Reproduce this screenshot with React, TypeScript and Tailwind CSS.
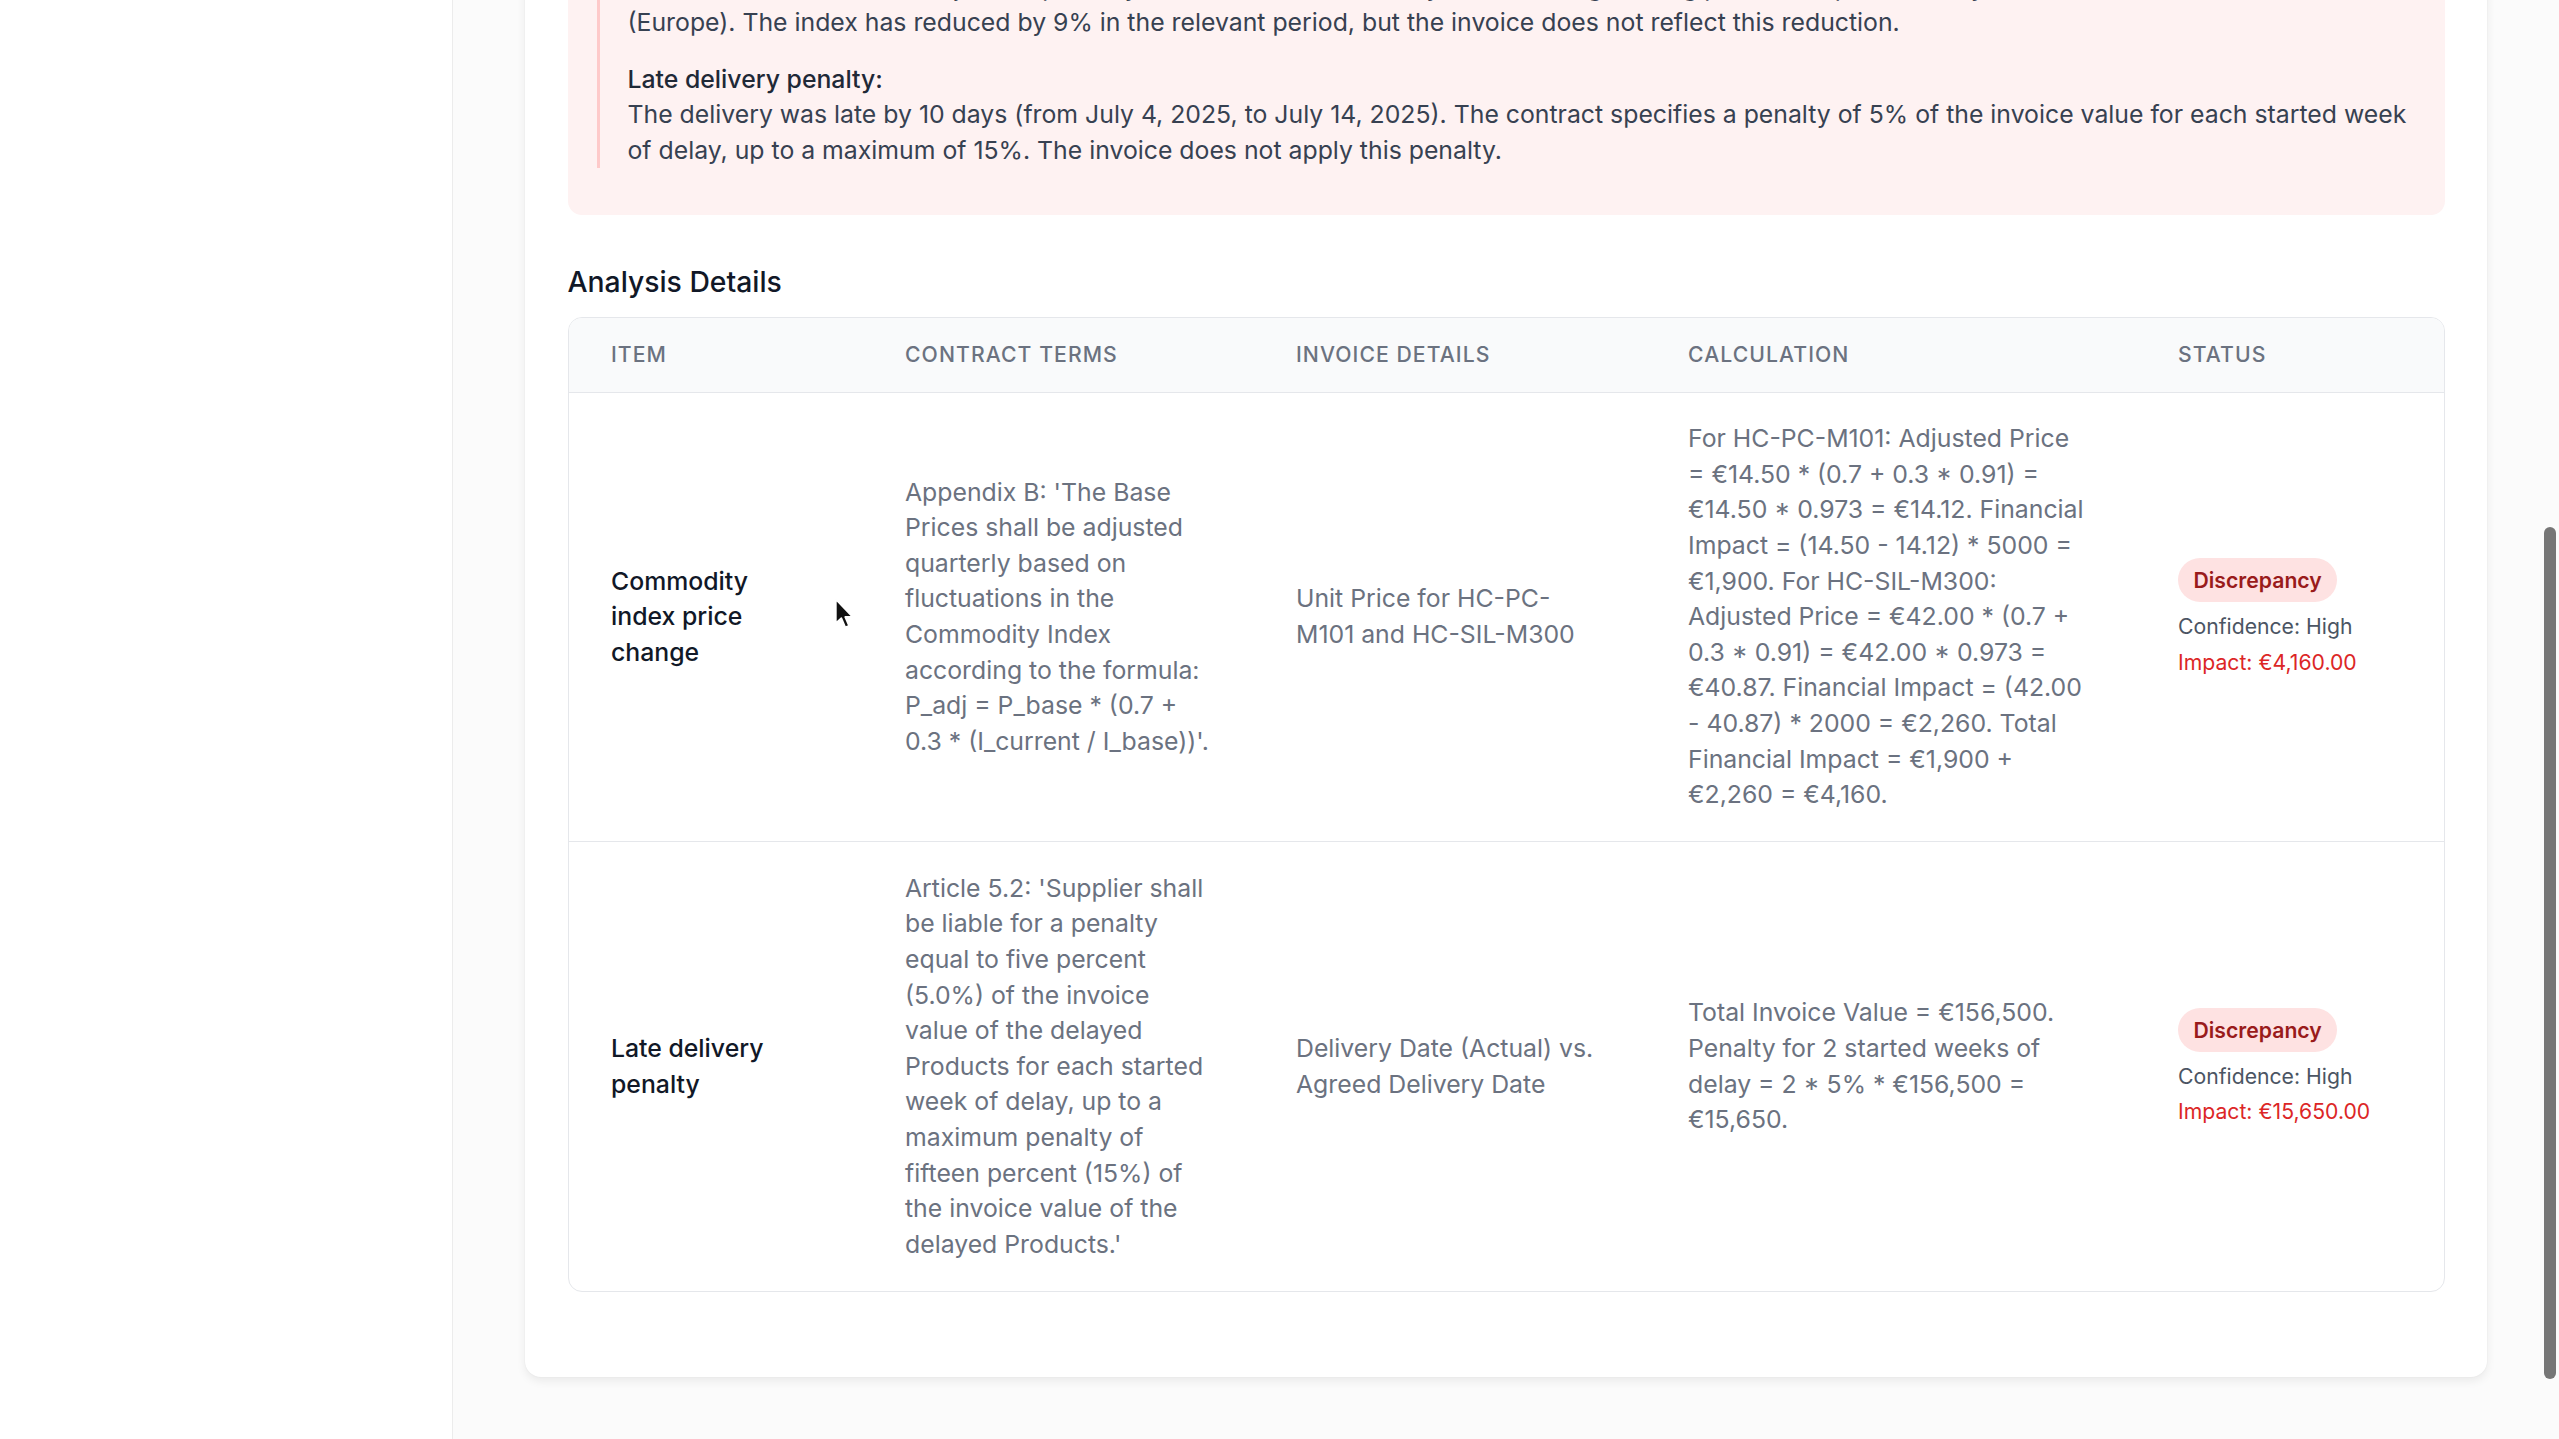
import React from "react";

const rows = [
  {
    item: "Commodity index price change",
    terms:
      "Appendix B: 'The Base Prices shall be adjusted quarterly based on fluctuations in the Commodity Index according to the formula: P_adj = P_base * (0.7 + 0.3 * (I_current / I_base))'.",
    invoice: "Unit Price for HC-PC-M101 and HC-SIL-M300",
    calc:
      "For HC-PC-M101: Adjusted Price = €14.50 * (0.7 + 0.3 * 0.91) = €14.50 * 0.973 = €14.12. Financial Impact = (14.50 - 14.12) * 5000 = €1,900. For HC-SIL-M300: Adjusted Price = €42.00 * (0.7 + 0.3 * 0.91) = €42.00 * 0.973 = €40.87. Financial Impact = (42.00 - 40.87) * 2000 = €2,260. Total Financial Impact = €1,900 + €2,260 = €4,160.",
    impact: "Impact: €4,160.00",
  },
  {
    item: "Late delivery penalty",
    terms:
      "Article 5.2: 'Supplier shall be liable for a penalty equal to five percent (5.0%) of the invoice value of the delayed Products for each started week of delay, up to a maximum penalty of fifteen percent (15%) of the invoice value of the delayed Products.'",
    invoice: "Delivery Date (Actual) vs. Agreed Delivery Date",
    calc:
      "Total Invoice Value = €156,500. Penalty for 2 started weeks of delay = 2 * 5% * €156,500 = €15,650.",
    impact: "Impact: €15,650.00",
  },
];

function Cursor() {
  return (
    <svg
      className="absolute left-[834px] top-[598px] pointer-events-none"
      width="22"
      height="32"
      viewBox="0 0 14 21"
    >
      <path
        d="M1 1 L1 16.5 L4.6 13.2 L7.2 19.2 L9.6 18.2 L7.1 12.4 L12 12.4 Z"
        fill="#111"
        stroke="#fff"
        strokeWidth="1.1"
        strokeLinejoin="round"
      />
    </svg>
  );
}

export default function App() {
  return (
    <div className="flex h-screen w-screen overflow-hidden bg-[#fbfbfb] font-[Inter,sans-serif]">
      <aside className="h-full w-[453px] shrink-0 border-r border-[#ececec] bg-white" />
      <main className="relative h-full flex-1 overflow-hidden">
        <div className="-mt-[136px] px-[72px]">
          <div className="rounded-[16px] bg-white px-[42.5px] pt-[42.5px] pb-[85px] shadow-[0_4px_10px_rgba(0,0,0,0.07),0_0_2px_rgba(0,0,0,0.05)]">
            <div className="rounded-[14px] bg-[#fef2f2] pt-[28px] pb-[47px] pl-[29px] pr-[28px]">
              <div className="flex flex-col gap-[21px] border-l-[3px] border-[#fecaca] pl-[28px] text-[24.8px] leading-[35.4px] text-[#374151]">
                <div>
                  <p className="font-medium text-[#1f2937]">Commodity index price change:</p>
                  <p>
                    The Base Prices must be adjusted quarterly based on the Commodity Index for engineering plastics as published by ICIS
                    <br />
                    (Europe). The index has reduced by 9% in the relevant period, but the invoice does not reflect this reduction.
                  </p>
                </div>
                <div>
                  <p className="font-medium text-[#1f2937]">Late delivery penalty:</p>
                  <p>
                    The delivery was late by 10 days (from July 4, 2025, to July 14, 2025). The contract specifies a penalty of 5% of the invoice value for each started week of delay, up to a maximum of 15%. The invoice does not apply this penalty.
                  </p>
                </div>
              </div>
            </div>

            <h3 className="mt-[46px] mb-[14px] text-[28.3px] leading-[42.5px] font-medium text-[#111827]">
              Analysis Details
            </h3>

            <div className="overflow-hidden rounded-[14px] border border-[#e5e7eb]">
              <table className="w-full table-fixed border-collapse">
                <colgroup>
                  <col className="w-[294px]" />
                  <col className="w-[391px]" />
                  <col className="w-[392px]" />
                  <col className="w-[490px]" />
                  <col />
                </colgroup>
                <thead className="bg-[#f9fafb]">
                  <tr className="border-b border-[#e5e7eb]">
                    {["Item", "Contract Terms", "Invoice Details", "Calculation", "Status"].map((h) => (
                      <th
                        key={h}
                        className="px-[42.5px] pt-[22px] pb-[23px] text-left text-[21.2px] leading-[28.3px] font-medium uppercase tracking-wider text-[#6b7280]"
                      >
                        {h}
                      </th>
                    ))}
                  </tr>
                </thead>
                <tbody>
                  {rows.map((r, i) => (
                    <tr key={r.item} className={i > 0 ? "border-t border-[#e5e7eb]" : ""}>
                      <td className="px-[42.5px] py-[28.5px] align-middle text-[24.8px] leading-[35.6px] font-medium text-[#111827]">
                        <div className="max-w-[180px]">{r.item}</div>
                      </td>
                      <td className="px-[42.5px] py-[28.5px] align-middle text-[24.8px] leading-[35.6px] text-[#6b7280]">
                        {r.terms}
                      </td>
                      <td className="px-[42.5px] py-[28.5px] align-middle text-[24.8px] leading-[35.6px] text-[#6b7280]">
                        {r.invoice}
                      </td>
                      <td className="px-[42.5px] py-[28.5px] align-middle text-[24.8px] leading-[35.6px] text-[#6b7280]">
                        <div className="max-w-[398px]">{r.calc}</div>
                      </td>
                      <td className="px-[42.5px] py-[28.5px] align-middle">
                        <span className="inline-flex rounded-full bg-[#fee2e2] px-[15.5px] py-[8px] text-[21.2px] leading-[28.3px] font-semibold text-[#991b1b]">
                          Discrepancy
                        </span>
                        <div className="mt-[10px] text-[21.2px] leading-[28.3px] text-[#4b5563]">Confidence: High</div>
                        <div className="mt-[7px] text-[21.2px] leading-[28.3px] text-[#dc2626]">{r.impact}</div>
                      </td>
                    </tr>
                  ))}
                </tbody>
              </table>
            </div>
          </div>
        </div>
        <div className="absolute right-[3px] top-[527px] h-[852px] w-[12px] rounded-full bg-[#767676]" />
      </main>
      <Cursor />
    </div>
  );
}
